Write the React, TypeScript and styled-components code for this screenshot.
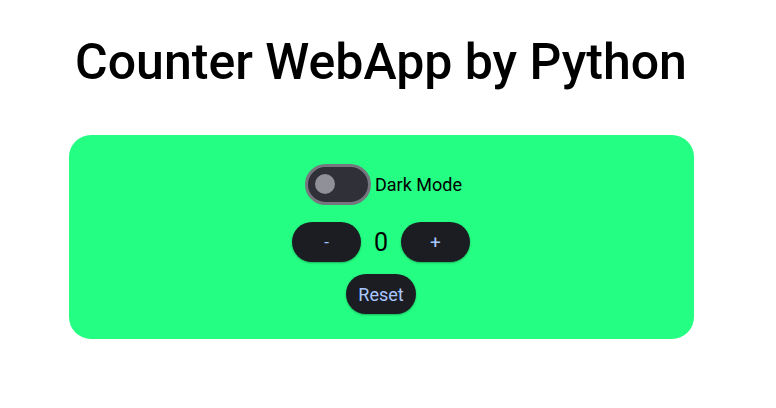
import React, { useState } from "react";
import styled, { createGlobalStyle } from "styled-components";

const Global = createGlobalStyle`
  html, body { margin: 0; padding: 0; background: #ffffff; }
  body { font-family: Roboto, "Noto Sans", sans-serif; }
`;

const Page = styled.div`
  width: 762px;
  display: flex;
  flex-direction: column;
  align-items: center;
`;

const Title = styled.h1`
  margin: 0;
  padding-top: 37px;
  height: 135px;
  box-sizing: border-box;
  font-size: 50px;
  font-weight: 500;
  line-height: 51px;
  color: #000;
`;

const Card = styled.div`
  width: 625px;
  height: 204px;
  box-sizing: border-box;
  padding: 25px;
  background: #24fe82;
  border-radius: 22px;
  display: flex;
  flex-direction: column;
  align-items: center;
`;

const Row = styled.div<{ $h: number; $gap: number; $mt: number; $pl?: number }>`
  height: ${(p) => p.$h}px;
  margin-top: ${(p) => p.$mt}px;
  padding-left: ${(p) => p.$pl ?? 0}px;
  display: flex;
  align-items: center;
  gap: ${(p) => p.$gap}px;
`;

const Track = styled.button<{ $on: boolean }>`
  width: 66px;
  height: 41px;
  box-sizing: border-box;
  border-radius: 21px;
  border: 3px solid #75767e;
  background: #2f3038;
  padding: 0;
  position: relative;
  cursor: pointer;
`;

const Thumb = styled.span<{ $on: boolean }>`
  position: absolute;
  top: 7.5px;
  left: ${(p) => (p.$on ? "33px" : "7px")};
  width: 20px;
  height: 20px;
  border-radius: 50%;
  background: #8f9098;
`;

const Label = styled.span`
  font-size: 18px;
  color: #000;
`;

const Pill = styled.button<{ $w: number; $fs: number }>`
  width: ${(p) => p.$w}px;
  height: 40px;
  border: none;
  border-radius: 20px;
  background: #1b1d23;
  color: #a9c7ff;
  font-family: Roboto, sans-serif;
  font-size: ${(p) => p.$fs}px;
  box-shadow: 0 1px 2px rgba(0, 0, 0, 0.3);
  cursor: pointer;
  padding: 0;
`;

const Count = styled.span`
  font-size: 25px;
  color: #000;
  width: 30px;
  text-align: center;
`;

export default function App() {
  const [dark, setDark] = useState(false);
  const [n, setN] = useState(0);
  return (
    <>
      <Global />
      <Page>
        <Title>Counter WebApp by Python</Title>
        <Card>
          <Row $h={48} $gap={4} $mt={0} $pl={5}>
            <Track $on={dark} onClick={() => setDark(!dark)}>
              <Thumb $on={dark} />
            </Track>
            <Label>Dark Mode</Label>
          </Row>
          <Row $h={48} $gap={5} $mt={10}>
            <Pill $w={69} $fs={17} onClick={() => setN(n - 1)}>-</Pill>
            <Count>{n}</Count>
            <Pill $w={69} $fs={19} onClick={() => setN(n + 1)}>+</Pill>
          </Row>
          <Row $h={40} $gap={0} $mt={8}>
            <Pill $w={70} $fs={18} onClick={() => setN(0)}>Reset</Pill>
          </Row>
        </Card>
      </Page>
    </>
  );
}
